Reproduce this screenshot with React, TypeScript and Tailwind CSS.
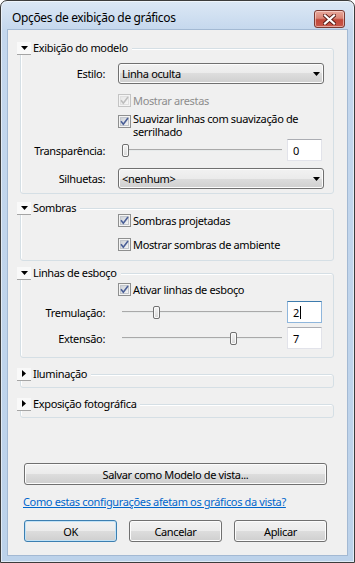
import React from "react";

function Tri({ open }: { open: boolean }) {
  return (
    <div className="flex h-[13px] w-[14px] shrink-0 items-center justify-center border-b border-[#a5a5a5] bg-[#f9f9f9]">
      {open ? (
        <svg width="7" height="4" viewBox="0 0 7 4">
          <path d="M0 0H7L3.5 4Z" fill="#000" />
        </svg>
      ) : (
        <svg width="4" height="7" viewBox="0 0 4 7">
          <path d="M0 0V7L4 3.5Z" fill="#000" />
        </svg>
      )}
    </div>
  );
}

function Group({
  title,
  open,
  className,
  boxClass,
  children,
}: {
  title: string;
  open: boolean;
  className: string;
  boxClass: string;
  children?: React.ReactNode;
}) {
  return (
    <div className={className}>
      <div className="relative z-10 flex h-[14px] items-center">
        <Tri open={open} />
        <span className="bg-[#f0f0f0] pl-[2px] pr-[4px] leading-[14px]">{title}</span>
      </div>
      <div
        className={
          "-mt-[7px] ml-[3px] rounded-[3px] border border-[#d5dfe5] shadow-[inset_1px_1px_0_#ffffff] " + boxClass
        }
      >
        {children}
      </div>
    </div>
  );
}

function Row({
  label,
  className,
  children,
}: {
  label?: string;
  className: string;
  children?: React.ReactNode;
}) {
  return (
    <div className={"flex " + className}>
      <div className="w-[84px] shrink-0 self-center text-right">{label}</div>
      <div className="ml-[13px] flex flex-1 items-center">{children}</div>
    </div>
  );
}

function CheckBox({ disabled }: { disabled?: boolean }) {
  return (
    <svg width="13" height="13" viewBox="0 0 13 13" className="shrink-0">
      <defs>
        <linearGradient id="cbg" x1="0" y1="0" x2="1" y2="1">
          <stop offset="0" stopColor="#cbcfd5" />
          <stop offset="1" stopColor="#f6f6f6" />
        </linearGradient>
        <linearGradient id="cbgd" x1="0" y1="0" x2="1" y2="1">
          <stop offset="0" stopColor="#e6e6e6" />
          <stop offset="1" stopColor="#f7f7f7" />
        </linearGradient>
      </defs>
      <rect x="0.5" y="0.5" width="12" height="12" fill="#f4f4f4" stroke={disabled ? "#c4c4c4" : "#8e8f8f"} />
      <rect x="2.5" y="2.5" width="8" height="8" fill={disabled ? "url(#cbgd)" : "url(#cbg)"} stroke={disabled ? "#e0e0e0" : "#c2c6cc"} />
      <path
        d="M3 6.3 L5.3 9.2 L10 3"
        fill="none"
        stroke={disabled ? "#bdbdbd" : "#4a5f97"}
        strokeWidth="1.6"
      />
    </svg>
  );
}

function Combo({ value }: { value: string }) {
  return (
    <div className="flex h-[21px] w-[206px] items-center justify-between rounded-[3px] border border-[#707070] bg-[linear-gradient(to_bottom,#f2f2f2_0%,#ebebeb_50%,#dddddd_50%,#cfcfcf_100%)] pl-[3px] pr-[3px] shadow-[inset_0_0_0_1px_#fcfcfc]">
      <span>{value}</span>
      <svg width="7" height="4" viewBox="0 0 7 4">
        <path d="M0 0H7L3.5 4Z" fill="#000" />
      </svg>
    </div>
  );
}

function Slider({ value, max }: { value: number; max: number }) {
  const left = 4 + (value / max) * 154;
  return (
    <div className="relative h-[22px] w-[165px] shrink-0">
      <div className="absolute left-[4px] right-[1px] top-[10px] h-[2px] border-t border-b border-t-[#a9a9a9] border-b-[#e7eaea]" />
      <div
        className="absolute top-[5px] h-[13px] w-[7px] rounded-[2px] border border-[#707070] bg-[linear-gradient(to_bottom,#f4f4f4,#d8d8d8)] shadow-[inset_0_0_0_1px_#fafafa]"
        style={{ left }}
      />
    </div>
  );
}

function NumBox({ value, focused }: { value: string; focused?: boolean }) {
  return (
    <div
      className={
        focused
          ? "ml-[4px] flex h-[22px] w-[35px] items-center border border-[#8fb6dc] border-t-[#3d7bad] bg-white pl-[5px]"
          : "ml-[4px] flex h-[22px] w-[35px] items-center border border-[#e2e3ea] border-t-[#abadb3] bg-white pl-[5px]"
      }
    >
      <span>{value}</span>
      {focused ? <span className="ml-[1px] h-[13px] w-[1px] bg-black" /> : null}
    </div>
  );
}

function Btn({ label, def, className }: { label: string; def?: boolean; className: string }) {
  return (
    <div
      className={
        (def
          ? "border-[#3c7fb1] shadow-[inset_0_0_0_1px_#c2e2f6] bg-[linear-gradient(to_bottom,#f2f2f2_0%,#ebebeb_50%,#dddddd_50%,#cfcfcf_100%)] "
          : "border-[#707070] shadow-[inset_0_0_0_1px_#fcfcfc] bg-[linear-gradient(to_bottom,#f2f2f2_0%,#ebebeb_50%,#dddddd_50%,#cfcfcf_100%)] ") +
        "flex h-[22px] items-center justify-center rounded-[3px] border " +
        className
      }
    >
      {label}
    </div>
  );
}

export default function App() {
  return (
    <div className="h-[563px] w-[355px] bg-white font-['Noto_Sans',sans-serif] text-[11px] leading-[15px] tracking-[-0.35px] text-black">
      <div className="flex h-[563px] w-[355px] flex-col rounded-t-[7px] border border-[#3c3c3c] bg-[linear-gradient(to_bottom,#dce8f5_0px,#c4d7ed_30px,#bcd2ea_100%)] shadow-[inset_0_0_0_1px_rgba(255,255,255,0.55)]">
        <div className="flex h-[29px] shrink-0 items-center justify-between pl-[11px] pr-[9px]">
          <span className="mt-[4px] text-[12px] tracking-[-0.35px] text-[#000]">Opções de exibição de gráficos</span>
          <div className="mt-[7px] flex h-[18px] w-[31px] items-center justify-center rounded-[3px] border border-[#7a3a32] bg-[linear-gradient(to_bottom,#e9a99c_0%,#d98576_45%,#c2483a_55%,#c8584a_100%)] shadow-[inset_0_0_0_1px_rgba(255,230,225,0.55)]">
            <svg width="13" height="11" viewBox="0 0 13 11">
              <path d="M2 1.5 L11 9.5 M11 1.5 L2 9.5" stroke="#5a1d17" strokeWidth="4" strokeLinecap="square" />
              <path d="M2 1.5 L11 9.5 M11 1.5 L2 9.5" stroke="#ffffff" strokeWidth="2.2" strokeLinecap="square" />
            </svg>
          </div>
        </div>
        <div className="mx-[7px] mb-[7px] flex flex-1 flex-col bg-[#f0f0f0] pl-[9px] pr-[13px] shadow-[0_0_0_1px_#a3b9d3]">
          <Group title="Exibição do modelo" open className="mt-[11px]" boxClass="pt-[14px] pb-[4px] pr-[9px]">
            <Row label="Estilo:" className="h-[21px]">
              <Combo value="Linha oculta" />
            </Row>
            <Row className="mt-[9px] h-[15px]">
              <CheckBox disabled />
              <span className="ml-[2px] text-[#8d8d8d]">Mostrar arestas</span>
            </Row>
            <Row className="mt-[4px]">
              <div className="flex items-start">
                <div className="mt-[3px]">
                  <CheckBox />
                </div>
                <div className="ml-[2px] flex flex-col">
                  <span className="h-[13px] leading-[13px]">Suavizar linhas com suavização de</span>
                  <span className="h-[13px] leading-[13px]">serrilhado</span>
                </div>
              </div>
            </Row>
            <Row label="Transparência:" className="mt-[1px] h-[22px]">
              <Slider value={0} max={100} />
              <NumBox value="0" />
            </Row>
            <Row label="Silhuetas:" className="mt-[7px] h-[21px]">
              <Combo value="<nenhum>" />
            </Row>
          </Group>

          <Group title="Sombras" open className="mt-[7px]" boxClass="pt-[5px] pb-[9px]">
            <Row className="h-[13px]">
              <CheckBox />
              <span className="ml-[2px]">Sombras projetadas</span>
            </Row>
            <Row className="mt-[11px] h-[13px]">
              <CheckBox />
              <span className="ml-[2px]">Mostrar sombras de ambiente</span>
            </Row>
          </Group>

          <Group title="Linhas de esboço" open className="mt-[5px]" boxClass="pt-[9px] pb-[8px]">
            <Row className="h-[13px]">
              <CheckBox />
              <span className="ml-[2px]">Ativar linhas de esboço</span>
            </Row>
            <Row label="Tremulação:" className="mt-[5px] h-[22px]">
              <Slider value={2} max={10} />
              <NumBox value="2" focused />
            </Row>
            <Row label="Extensão:" className="mt-[4px] h-[22px]">
              <Slider value={7} max={10} />
              <NumBox value="7" />
            </Row>
          </Group>

          <Group title="Iluminação" open={false} className="mt-[9px]" boxClass="h-[14px]" />
          <Group title="Exposição fotográfica" open={false} className="mt-[9px]" boxClass="h-[14px]" />

          <div className="flex-1" />

          <div className="pl-[7px]">
            <Btn label="Salvar como Modelo de vista..." className="w-[303px]" />
          </div>
          <div className="mt-[9px] pl-[6px]">
            <span className="text-[#0066cc] underline">Como estas configurações afetam os gráficos da vista?</span>
          </div>
          <div className="mb-[13px] mt-[11px] flex gap-[12px] pl-[7px]">
            <Btn label="OK" def className="w-[93px]" />
            <Btn label="Cancelar" className="w-[93px]" />
            <Btn label="Aplicar" className="w-[93px]" />
          </div>
        </div>
      </div>
    </div>
  );
}
